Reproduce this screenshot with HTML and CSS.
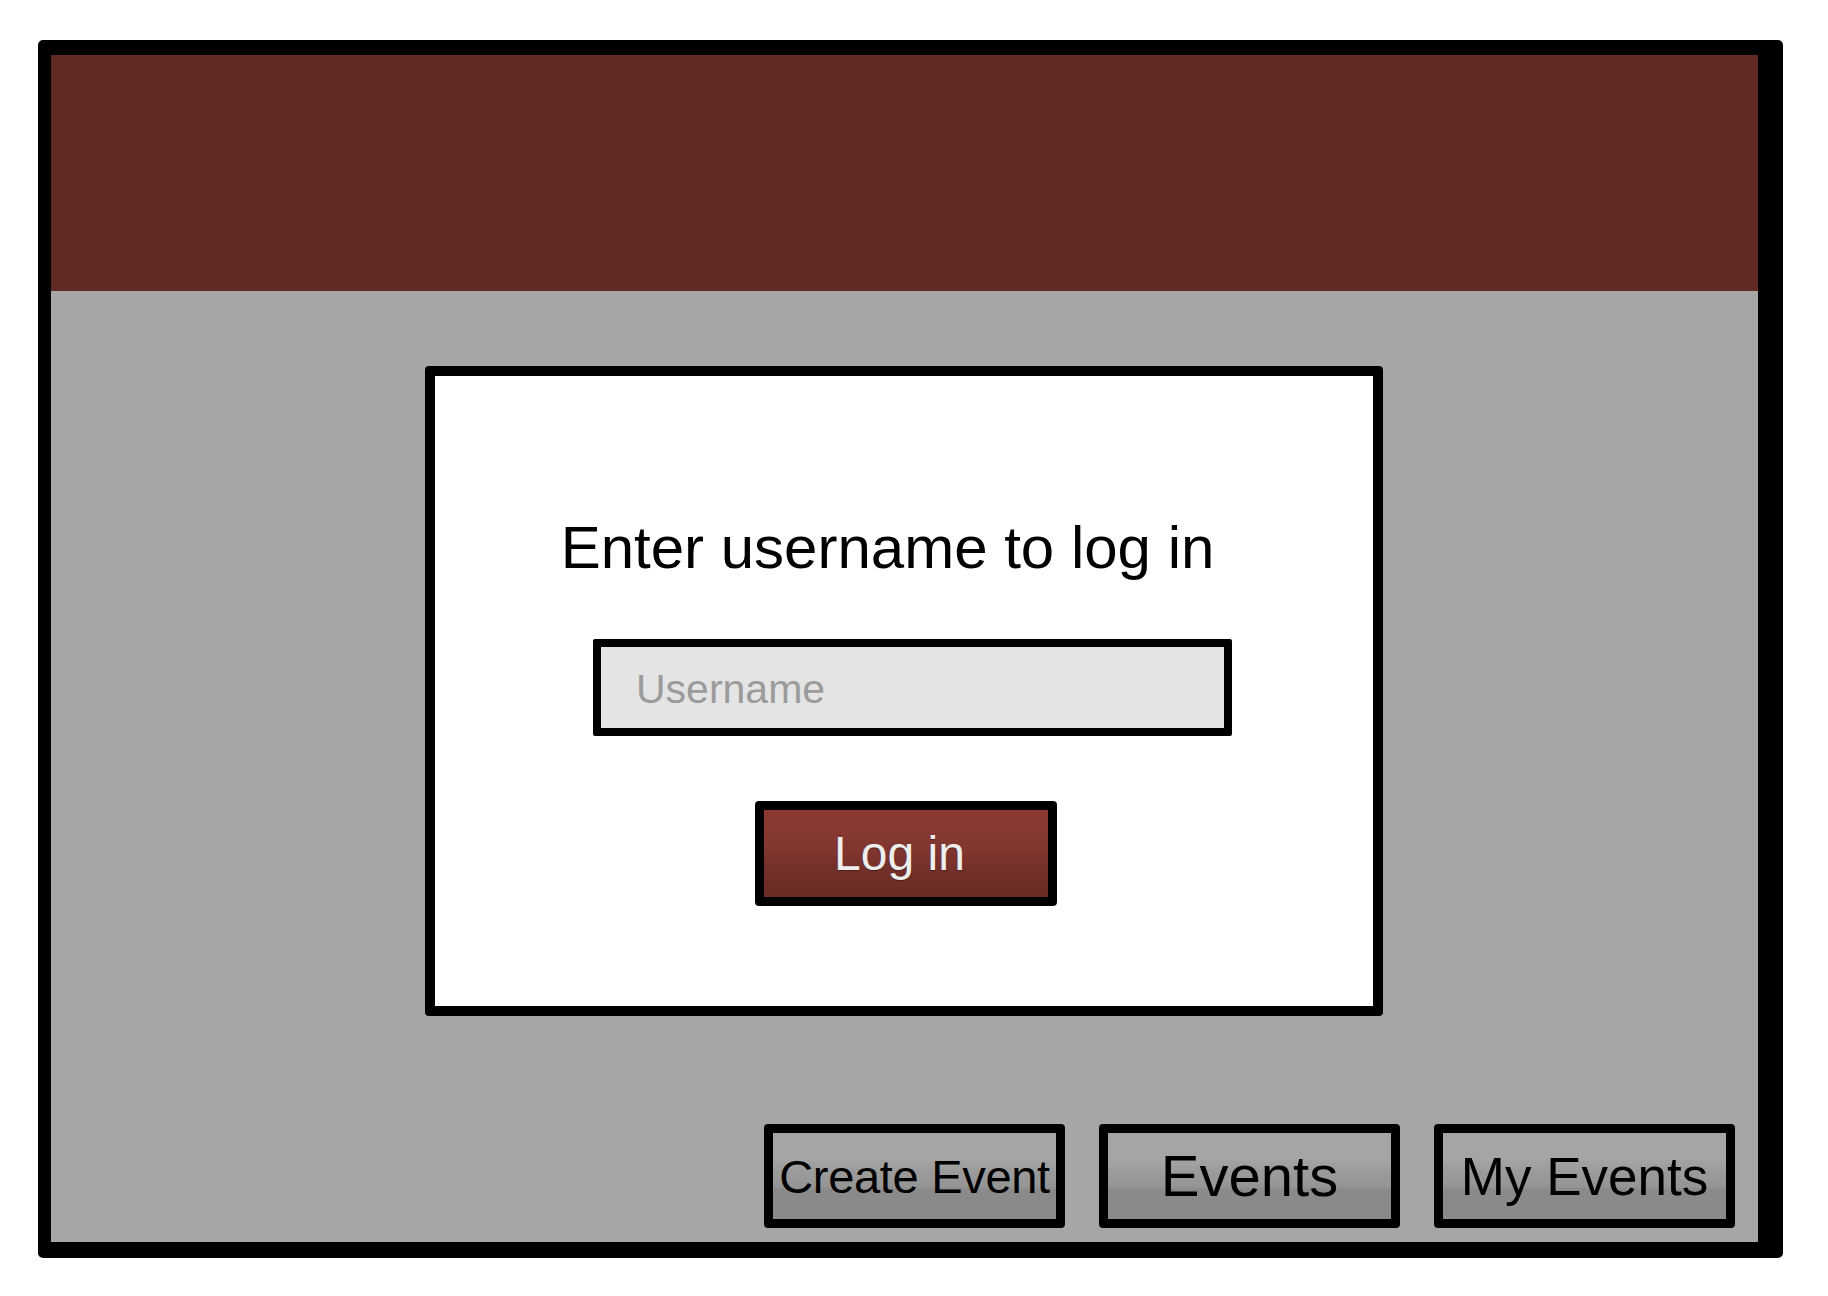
FILE: index.html
```html
<!DOCTYPE html>
<html>
<head>
    <meta charset="utf-8">
    <title>Log in</title>
    <link rel="stylesheet" href="styles.css">
</head>
<body>

<div class="window">
    <div class="topbar"></div>

    <div class="stage">
        <!-- login dialog -->
        <div class="login-box">
            <h1 class="login-title">Enter username to log in</h1>
            <input class="username" type="text" placeholder="Username">
            <button class="login-btn" type="button">Log in</button>
        </div>

        <!-- bottom navigation -->
        <div class="nav">
            <button class="nav-btn create" type="button">Create Event</button>
            <button class="nav-btn events" type="button">Events</button>
            <button class="nav-btn mine" type="button">My Events</button>
        </div>
    </div>
</div>

</body>
</html>
```

FILE: styles.css
```css
html, body {
    margin: 0;
    padding: 0;
    background: #fff;
}

body {
    font-family: "Liberation Sans", Arial, Helvetica, sans-serif;
    color: #000;
}

.window {
    box-sizing: border-box;
    width: 1745px;
    height: 1218px;
    margin: 40px 0 0 38px;
    border-style: solid;
    border-color: #000;
    border-width: 15px 25px 16px 13px;
    border-radius: 5px;
    background: #a6a6a6;
    display: flex;
    flex-direction: column;
}

.topbar {
    height: 236px;
    background: #622a24;
}

.stage {
    flex: 1;
    display: flex;
    flex-direction: column;
}

.login-box {
    box-sizing: border-box;
    align-self: center;
    width: 958px;
    height: 650px;
    margin: 75px 2px 0 0;
    padding-top: 142px;
    border: 10px solid #000;
    border-radius: 4px;
    background: #fff;
    display: flex;
    flex-direction: column;
    align-items: center;
}

.login-title {
    margin: 0 32px 0 0;
    font-size: 60px;
    line-height: 60px;
    font-weight: normal;
}

.username {
    box-sizing: border-box;
    width: 639px;
    height: 97px;
    margin: 61px 0 0 18px;
    padding: 4px 0 0 35px;
    border: 8px solid #000;
    border-radius: 2px;
    background: #e4e4e4;
    font-family: "Liberation Sans", Arial, Helvetica, sans-serif;
    font-size: 41px;
    color: #333;
    outline: none;
}

.username::placeholder {
    color: #9b9b9b;
}

.login-btn {
    box-sizing: border-box;
    width: 302px;
    height: 105px;
    margin: 65px 0 0 4px;
    padding: 0 12px 0 0;
    border: 9px solid #000;
    border-radius: 4px;
    background: linear-gradient(#8c3a31 0%, #823630 45%, #732f29 70%, #692b25 100%);
    font-family: "Liberation Sans", Arial, Helvetica, sans-serif;
    font-size: 48px;
    line-height: 1;
    color: #eeeeee;
    text-shadow: 0 1px 1px rgba(0, 0, 0, 0.35);
    cursor: pointer;
}

.nav {
    margin-top: auto;
    padding: 0 23px 14px 0;
    display: flex;
    justify-content: flex-end;
    gap: 34px;
}

.nav-btn {
    box-sizing: border-box;
    width: 301px;
    height: 104px;
    padding: 0;
    border: 9px solid #000;
    border-radius: 4px;
    background: linear-gradient(#a5a5a5 0%, #a5a5a5 30%, #9b9b9b 45%, #959595 62%, #8a8a8a 66%, #8a8a8a 100%);
    font-family: "Liberation Sans", Arial, Helvetica, sans-serif;
    line-height: 1;
    color: #000;
    white-space: nowrap;
    display: flex;
    align-items: center;
    justify-content: center;
    cursor: pointer;
}

.nav-btn.create { font-size: 47px; letter-spacing: -0.3px; }
.nav-btn.events { font-size: 58px; }
.nav-btn.mine   { font-size: 53px; }
```
